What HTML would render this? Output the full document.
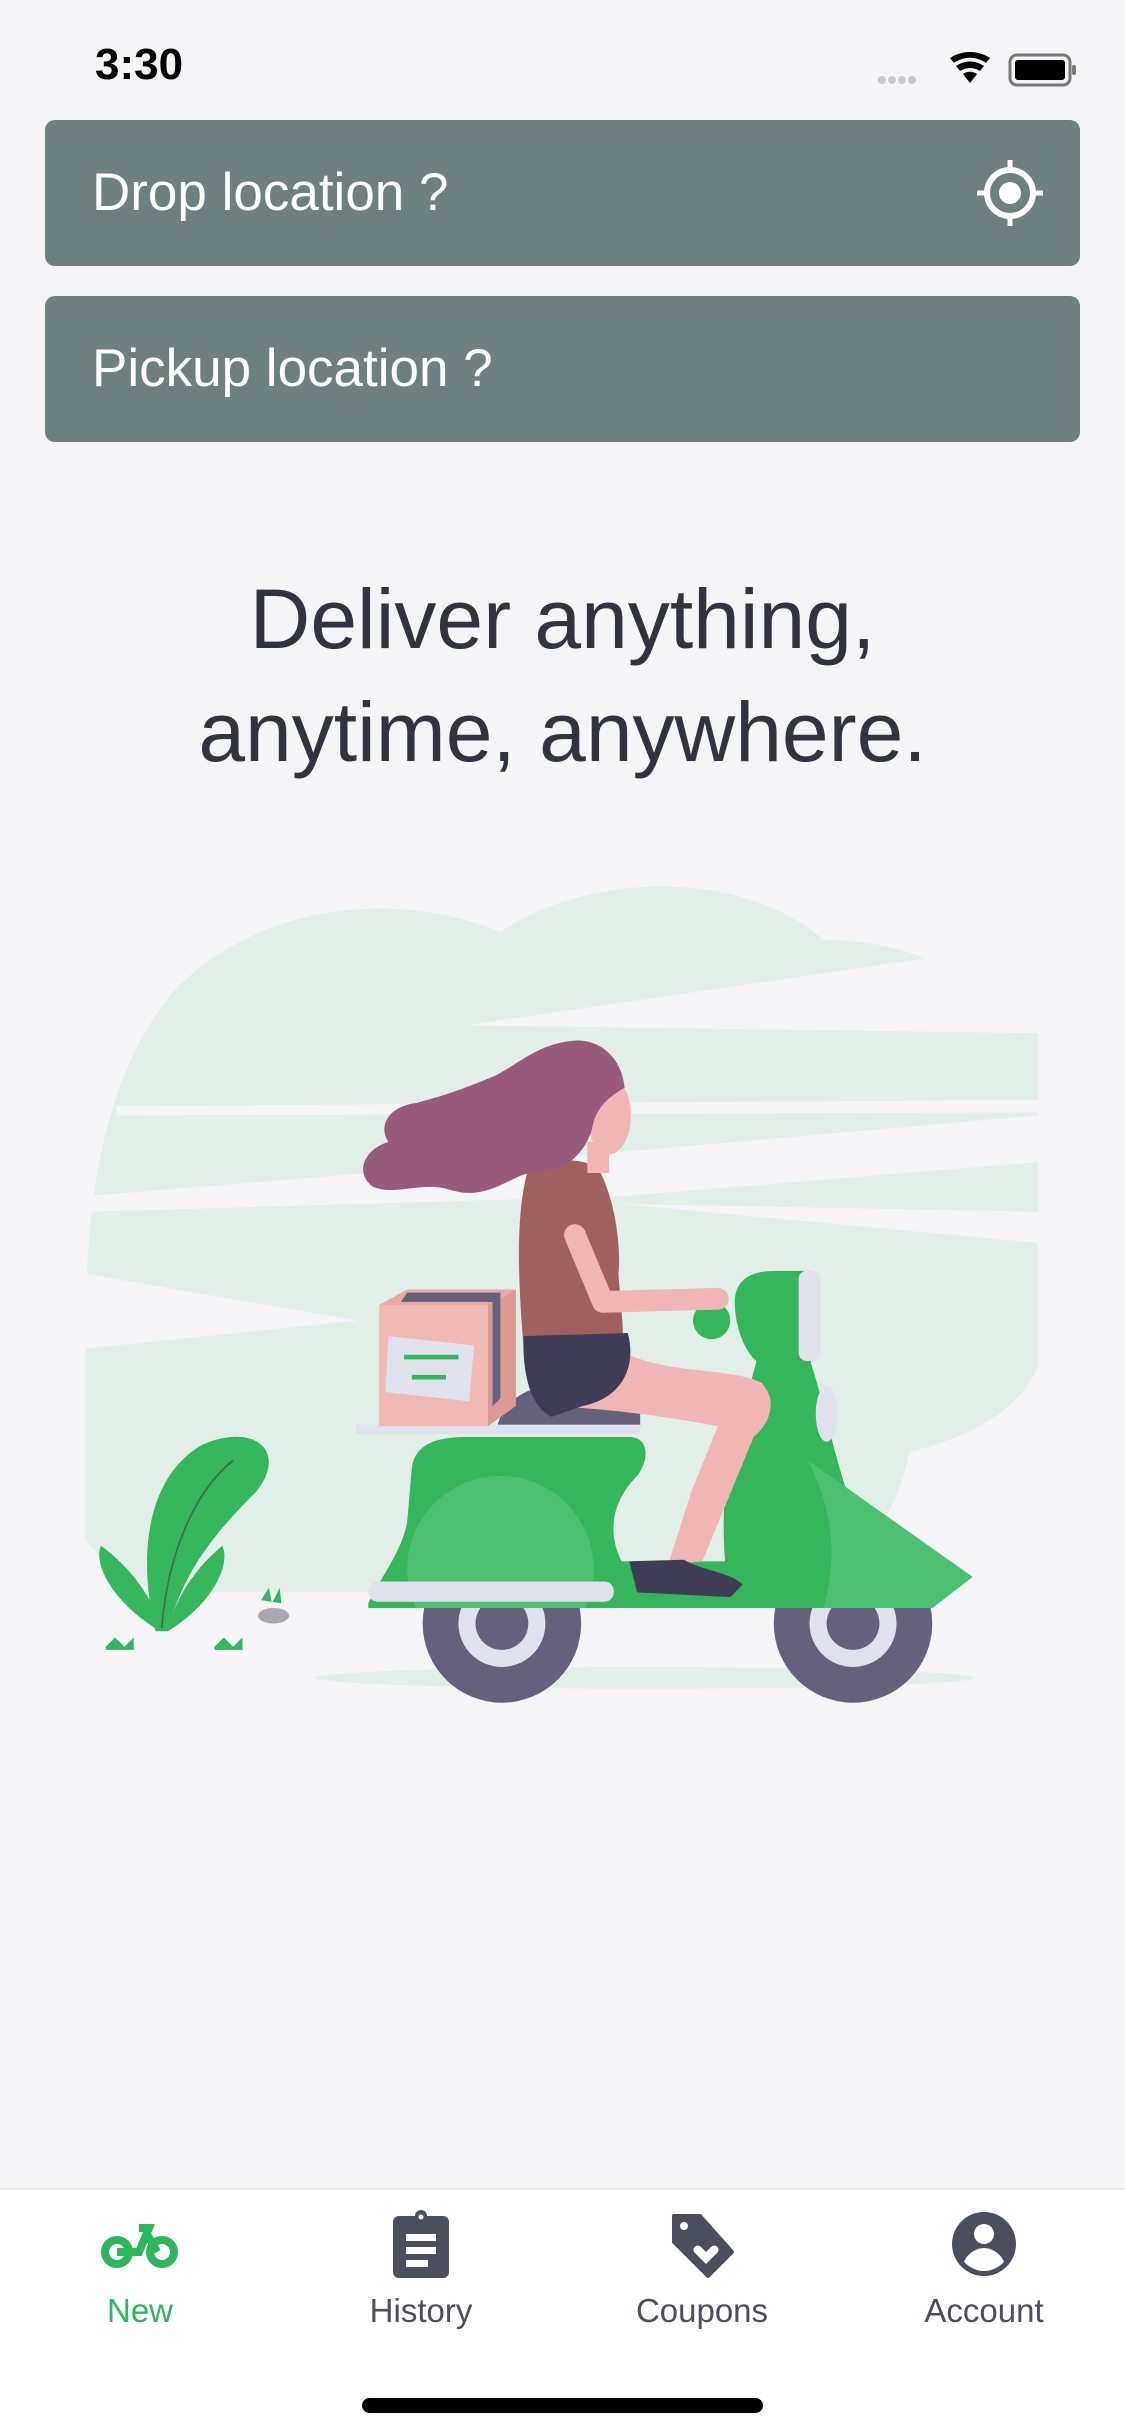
<!DOCTYPE html>
<html><head><meta charset="utf-8"><style>
*{margin:0;padding:0;box-sizing:border-box}
body{width:1125px;height:2436px;background:#f5f5f8;position:relative;overflow:hidden;font-family:"Liberation Sans",sans-serif}
.time{position:absolute;left:95px;top:40px;font-size:44px;font-weight:bold;color:#000}
.box{position:absolute;left:45px;width:1035px;height:146px;background:#6e7f80;border-radius:10px;color:#fff;font-size:53px;padding-left:47px;line-height:146px}
.h{position:absolute;left:0;width:1125px;text-align:center;font-size:84px;color:#33333f;line-height:113px}
.tab{position:absolute;top:2188px;left:0;width:1125px;height:248px;background:#fff;border-top:2px solid #ebebee}
.lbl{position:absolute;top:102px;width:200px;text-align:center;font-size:33px;color:#4b4e5d}
.ic{position:absolute;top:20px}
.home{position:absolute;left:362px;top:2398px;width:401px;height:15px;border-radius:8px;background:#000}
</style></head><body>
<div class="time">3:30</div>
<svg style="position:absolute;left:870px;top:50px" width="210" height="40" viewBox="0 0 210 40">
<g fill="#c7c7cc"><circle cx="12" cy="30" r="4"/><circle cx="22" cy="30" r="4"/><circle cx="32" cy="30" r="4"/><circle cx="42" cy="30" r="4"/></g>
<path d="M80 8 C92 0 108 0 120 8 L116 13 C106 6 94 6 84 13Z M86 16 C95 10 105 10 114 16 L110 21 C104 17 96 17 90 21Z M93 24 C97 21 103 21 107 24 L100 33Z" fill="#000"/>
<rect x="140" y="5" width="60" height="30" rx="7" fill="none" stroke="#777" stroke-width="3"/>
<rect x="145" y="10" width="50" height="20" rx="3" fill="#000"/>
<rect x="202" y="15" width="4" height="10" rx="2" fill="#777"/>
</svg>
<div class="box" style="top:120px">Drop location ?
<svg style="position:absolute;left:930px;top:38px" width="70" height="70" viewBox="0 0 70 70"><circle cx="35" cy="35" r="23" fill="none" stroke="#fff" stroke-width="6"/><circle cx="35" cy="35" r="11" fill="#fff"/><path d="M35 2v10M35 58v10M2 35h10M58 35h10" stroke="#fff" stroke-width="5"/></svg></div>
<div class="box" style="top:296px">Pickup location ?</div>
<div class="h" style="top:563px">Deliver anything,</div>
<div class="h" style="top:676px">anytime, anywhere.</div>

<svg style="position:absolute;left:0;top:0" width="1125" height="2436" viewBox="0 0 724 1568">
<defs><clipPath id="bc"><path d="M237,1032 C245,1015 258,1000 262,980 L265,945 C267,930 280,925 300,925 L405,925 C418,925 418,940 410,950 C395,965 390,985 400,1005 L480,1005 L480,1035 L237,1035Z"/></clipPath></defs>
<path fill="#e2efe8" d="M55,1030 L55,860 C55,760 70,690 110,640 C160,585 250,570 322,600 C380,560 480,560 530,605 C560,605 585,612 595,617 L300,660 L668,665 L668,880 C650,920 600,930 585,935 C575,990 540,1020 480,1025 L100,1025 C75,1010 60,1000 55,990 Z"/>
<g fill="#f5f5f8">
<polygon points="75,712 668,708 668,716 75,718"/>
<polygon points="55,780 55,770 360,745 668,718 668,748 400,770"/>
<polygon points="400,775 668,800 668,780"/>
<polygon points="55,820 230,850 55,868"/>
</g>
<ellipse cx="415" cy="1080" rx="212" ry="7" fill="#e2efe8"/>
<!-- plants -->
<path d="M100,1050 C88,1000 95,950 130,930 C165,915 185,935 165,960 C140,985 118,1010 108,1050 Z" fill="#35b55c"/>
<path d="M103,1050 C70,1030 60,1005 65,995 C85,1010 100,1030 103,1050Z" fill="#35b55c"/>
<path d="M108,1050 C140,1030 148,1005 143,995 C125,1010 112,1030 108,1050Z" fill="#35b55c"/>
<path d="M104,1048 C108,1000 125,960 150,940" stroke="#3f6b4c" stroke-width="1" fill="none"/>
<path d="M68,1060 l6,-6 l6,6 l6,-6 l0,8 h-18z M138,1060 l6,-6 l6,6 l6,-6 l0,8 h-18z" fill="#35b55c"/>
<path d="M168,1030 l5,-8 l2,10 l5,-10 l1,10z" fill="#35b55c"/>
<ellipse cx="176" cy="1040" rx="10" ry="5" fill="#a8a8b0"/>
<!-- wheels -->
<circle cx="323" cy="1045" r="51" fill="#65617d"/><circle cx="323" cy="1045" r="28" fill="#dfe1ec"/><circle cx="323" cy="1045" r="17" fill="#65617d"/>
<circle cx="549" cy="1045" r="51" fill="#65617d"/><circle cx="549" cy="1045" r="28" fill="#dfe1ec"/><circle cx="549" cy="1045" r="17" fill="#65617d"/>
<!-- body -->
<path fill="#35b55c" d="M237,1032 C245,1015 258,1000 262,980 L265,945 C267,930 280,925 300,925 L405,925 C418,925 418,940 410,950 C395,965 390,985 400,1005 L480,1005 L480,1035 L237,1035Z"/>
<circle cx="322" cy="1010" r="60" fill="#4cc071" clip-path="url(#bc)"/>
<path fill="#35b55c" d="M470,1035 C465,1000 462,960 475,920 L488,872 L520,872 C530,900 535,930 545,960 L626,1015 L600,1035 Z"/>
<path fill="#4cc071" d="M520,940 L626,1015 L600,1035 L530,1035 C540,1000 535,970 520,940Z"/>
<rect x="237" y="1018" width="158" height="13" rx="6" fill="#dfe1ec"/>
<path fill="#35b55c" d="M473,835 C475,822 485,818 500,818 L522,818 L522,877 L488,877 C478,870 472,850 473,835Z"/>
<rect x="514" y="818" width="14" height="58" rx="5" fill="#dfe1ec"/>
<ellipse cx="532" cy="910" rx="7" ry="18" fill="#dfe1ec"/>
<circle cx="458" cy="850" r="12" fill="#35b55c"/>
<!-- seat & box -->
<path d="M320,918 C325,898 345,890 370,890 L412,895 L412,918Z" fill="#65617d"/>
<rect x="229" y="917" width="183" height="6" fill="#dfe1ec"/>
<rect x="244" y="840" width="70" height="78" fill="#f0b9b4"/>
<path d="M314,840 L332,830 L332,905 L314,918Z" fill="#d99a94"/>
<path d="M244,840 L262,830 L332,830 L314,840Z" fill="#e8aaa5"/>
<path d="M262,832 L322,832 L322,900 L317,905 L317,838 L258,838Z" fill="#65617d"/>
<path d="M250,860 L305,866 L302,902 L248,896Z" fill="#dfe1ec"/>
<rect x="260" y="872" width="35" height="3" fill="#35b55c"/><rect x="265" y="885" width="22" height="3" fill="#35b55c"/>
<!-- girl -->
<path d="M350,880 L400,870 C430,885 470,880 490,890 C500,900 497,915 485,925 L452,1005 L430,1007 L445,960 L462,918 C430,912 400,908 370,906 Z" fill="#f0b6b6"/>
<path d="M405,1005 L440,1004 C455,1012 470,1012 478,1020 L470,1028 L410,1025 Z" fill="#3f3d56"/>
<path d="M340,752 C352,745 375,745 385,752 C395,770 400,800 398,820 C400,845 402,860 400,868 L337,868 C333,820 332,780 340,752 Z" fill="#a0605f"/>
<path d="M370,795 L388,838 L462,836" stroke="#f0b6b6" stroke-width="14" fill="none" stroke-linecap="round" stroke-linejoin="round"/>
<path d="M337,860 L404,858 C410,880 400,900 375,905 L355,912 C340,905 336,880 337,860Z" fill="#3f3d56"/>
<rect x="378" y="735" width="14" height="20" fill="#f0b6b6"/>
<ellipse cx="392" cy="718" rx="14" ry="25" fill="#f0b6b6"/>
<path fill="#975a7a" d="M402,700 C400,680 385,668 368,670 C345,672 330,688 315,694 C300,700 290,704 268,710 C250,712 243,725 250,735 C234,740 228,755 240,764 C255,770 272,760 290,766 C310,772 322,762 337,756 L360,752 C372,746 380,735 382,722 C386,710 394,705 402,700 Z"/>
</svg>

<div class="tab">
<svg class="ic" style="left:100px;top:22px" width="80" height="60" viewBox="0 0 80 60"><g fill="none" stroke="#2db75c" stroke-width="8"><circle cx="17" cy="40" r="12"/><circle cx="62" cy="40" r="12"/><path d="M17 40h22l10-24h-10M47 22l10 18"/></g></svg>
<div class="lbl" style="left:40px;color:#2db75c">New</div>
<svg class="ic" style="left:393px" width="56" height="68" viewBox="0 0 56 68"><rect x="0" y="6" width="56" height="62" rx="6" fill="#4b4e5d"/><circle cx="28" cy="6" r="6" fill="#4b4e5d"/><circle cx="28" cy="7" r="2.5" fill="#fff"/><rect x="13" y="24" width="30" height="7" fill="#fff"/><rect x="13" y="37" width="30" height="7" fill="#fff"/><rect x="13" y="50" width="22" height="7" fill="#fff"/></svg>
<div class="lbl" style="left:321px">History</div>
<svg class="ic" style="left:670px;top:22px" width="66" height="66" viewBox="0 0 66 66"><path d="M4 4h26l32 36-24 24L4 30Z" fill="#4b4e5d" stroke="#4b4e5d" stroke-width="4" stroke-linejoin="round"/><circle cx="14" cy="14" r="4" fill="#fff"/><path d="M36 52l-11-11c-4-4 1-10 6-6l5 5 5-5c5-4 10 2 6 6z" fill="#fff"/></svg>
<div class="lbl" style="left:602px">Coupons</div>
<svg class="ic" style="left:952px;top:22px" width="64" height="64" viewBox="0 0 64 64"><circle cx="32" cy="32" r="32" fill="#4b4e5d"/><circle cx="32" cy="22" r="10" fill="#fff"/><path d="M12 50c4-10 14-14 20-14s16 4 20 14c-6 6-13 9-20 9s-14-3-20-9z" fill="#fff"/></svg>
<div class="lbl" style="left:884px">Account</div>
</div>
<div class="home"></div>
</body></html>
